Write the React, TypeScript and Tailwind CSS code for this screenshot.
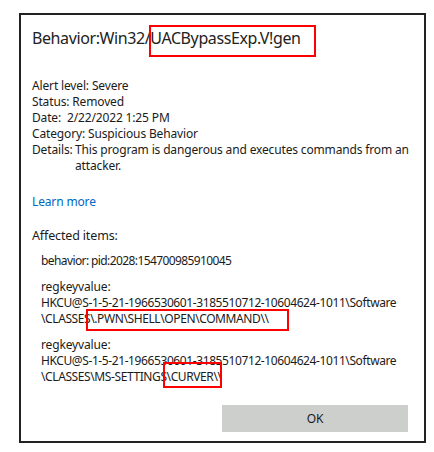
import React from "react";

const font = { fontFamily: '"Noto Sans", "Open Sans", sans-serif' };

function InfoRow({ label, children }: { label: string; children: React.ReactNode }) {
  return (
    <div className="flex">
      <span className="shrink-0 w-[43px]">{label}</span>
      <span className="w-[340px]">{children}</span>
    </div>
  );
}

function RegKey({ path }: { path: string[] }) {
  return (
    <div className="mt-[10px]">
      <div>regkeyvalue:</div>
      {path.map((line) => (
        <div key={line} className="tracking-[-0.4px]">{line}</div>
      ))}
    </div>
  );
}

export default function App() {
  return (
    <div className="min-h-screen w-[434px] h-[452px] bg-white pt-[13px] pl-[19px]" style={font}>
      <div className="relative flex flex-col w-[407px] h-[430px] border-2 border-[#222] pl-[11px] pr-[8px] text-[#1b1b1b] tracking-[-0.15px]">
        {/* Title */}
        <h1 className="mt-[11px] text-[16px] leading-[24px] tracking-[-0.4px] text-[#222]">
          Behavior:Win32/UACBypassExp.V!gen
        </h1>

        {/* Summary */}
        <div className="mt-[28px] text-[12px] leading-[16px]">
          <div>Alert level: Severe</div>
          <div>Status: Removed</div>
          <div>Date:&nbsp; 2/22/2022 1:25 PM</div>
          <div>Category: Suspicious Behavior</div>
          <InfoRow label="Details:">
            This program is dangerous and executes commands from an attacker.
          </InfoRow>
        </div>

        <a className="mt-[20px] text-[12px] leading-[16px] text-[#0067c0] cursor-pointer">Learn more</a>

        {/* Affected items */}
        <div className="mt-[17px] text-[12.5px] leading-[18px]">Affected items:</div>
        <div className="pl-[9px] text-[12px] leading-[16px] whitespace-nowrap">
          <div className="mt-[8px] tracking-[-0.6px]">behavior: pid:2028:154700985910045</div>
          <RegKey
            path={[
              "HKCU@S-1-5-21-1966530601-3185510712-10604624-1011\\Software",
              "\\CLASSES\\.PWN\\SHELL\\OPEN\\COMMAND\\\\",
            ]}
          />
          <RegKey
            path={[
              "HKCU@S-1-5-21-1966530601-3185510712-10604624-1011\\Software",
              "\\CLASSES\\MS-SETTINGS\\CURVER\\\\",
            ]}
          />
        </div>

        <button className="shrink-0 mt-auto mb-[9px] mr-[8px] self-end w-[186px] h-[27px] bg-[#cdcfcd] text-[12px] text-[#1b1b1b]">
          OK
        </button>

        {/* Annotation boxes */}
        <div className="absolute left-[128px] top-[10px] w-[167px] h-[32px] border-2 border-[#ff0000]" />
        <div className="absolute left-[65px] top-[294px] w-[203px] h-[22px] border-2 border-[#ff0000]" />
        <div className="absolute left-[142px] top-[347px] w-[59px] h-[26px] border-2 border-[#ff0000]" />
      </div>
    </div>
  );
}
